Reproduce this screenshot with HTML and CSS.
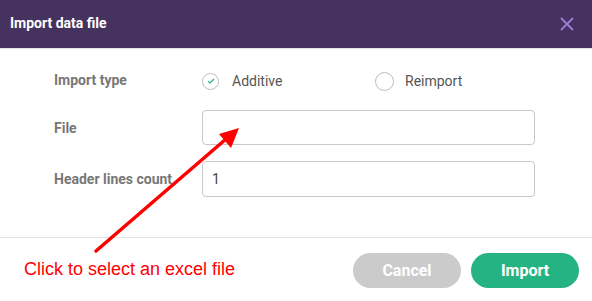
FILE: index.html
```html
<!DOCTYPE html>
<html>
<head>
<meta charset="utf-8">
<link rel="stylesheet" href="styles.css">
</head>
<body>
<div class="dialog">
  <div class="header">
    <span class="title">Import data file</span>
    <svg class="close" width="14" height="14" viewBox="0 0 14 14"><path d="M1 1 L13 13 M13 1 L1 13" stroke="#9b7fd4" stroke-width="1.8" fill="none"/></svg>
  </div>
  <div class="body">
    <div class="row row-type">
      <div class="label">Import type</div>
      <div class="options">
        <div class="option">
          <span class="radio checked"><svg width="8" height="6" viewBox="0 0 8 6"><path d="M1 3.2 L3 5 L7 1" stroke="#26b383" stroke-width="1.2" fill="none"/></svg></span>
          <span class="opt-text">Additive</span>
        </div>
        <div class="option">
          <span class="radio"></span>
          <span class="opt-text">Reimport</span>
        </div>
      </div>
    </div>
    <div class="row row-file">
      <div class="label">File</div>
      <div class="input"></div>
    </div>
    <div class="row row-lines">
      <div class="label">Header lines count</div>
      <div class="input input-lines">1</div>
    </div>
  </div>
  <div class="footer">
    <span class="hint">Click to select an excel file</span>
    <div class="buttons">
      <button class="btn btn-cancel">Cancel</button>
      <button class="btn btn-import">Import</button>
    </div>
  </div>
  <svg class="arrow" width="592" height="301" viewBox="0 0 592 301">
    <line x1="96" y1="251" x2="226" y2="139" stroke="#ff0000" stroke-width="3.5" stroke-linecap="round"/>
    <polygon points="239,128 219,134 231,148" fill="#ff0000"/>
  </svg>
</div>
</body>
</html>
```
FILE: styles.css
```css
* { box-sizing: border-box; }
html, body { margin: 0; padding: 0; background: #fff; }
body { font-family: Roboto, "Liberation Sans", sans-serif; width: 592px; height: 301px; overflow: hidden; }
.dialog { position: relative; width: 592px; height: 301px; }
.header {
  height: 49px;
  background: #45325e;
  border-bottom: 1px solid #e3e3e6;
  display: flex;
  align-items: center;
  justify-content: space-between;
  padding: 0 18px 2px 10px;
}
.title { color: #fff; font-weight: 700; font-size: 14px; }
.close { display: block; margin-top: 2px; }
.body { padding: 15px 0 0 54px; height: 189px; border-bottom: 1px solid #e3e3e3; }
.row { display: flex; align-items: center; }
.label { width: 148px; color: #777; font-weight: 700; font-size: 14px; white-space: nowrap; }
.row-type { height: 34px; }
.row-type .label { margin-top: -2px; }
.row-file { height: 35px; margin-top: 12px; }
.row-lines { height: 36px; margin-top: 16px; }
.options { display: flex; }
.option { display: flex; align-items: center; width: 173px; }
.radio {
  width: 17px; height: 17px; border-radius: 50%;
  border: 1px solid #bcbcbc;
  display: flex; align-items: center; justify-content: center;
  margin-right: 13px;
}
.opt-text { color: #555; font-size: 14px; }
.option + .option .radio { width: 19px; height: 19px; margin-right: 11px; }
.input {
  width: 333px; height: 100%;
  border: 1px solid #c8c8c8; border-radius: 4px;
  font-size: 14px; color: #444;
  display: flex; align-items: center; padding-left: 9px;
}
.footer {
  height: 62px;
  display: flex; align-items: center; justify-content: space-between;
  padding: 3px 13px 0 24px;
}
.hint { color: #ff0000; font-family: "Liberation Sans", Arial, sans-serif; font-size: 18px; margin-top: -2px; }
.buttons { display: flex; gap: 10px; }
.btn {
  width: 108px; height: 35px; border: none; border-radius: 18px;
  color: #fff; font-family: Roboto, sans-serif; font-weight: 700; font-size: 16px;
}
.btn-cancel { background: #cbcbcb; }
.btn-import { background: #26b383; }
.arrow { position: absolute; left: 0; top: 0; pointer-events: none; }
```
